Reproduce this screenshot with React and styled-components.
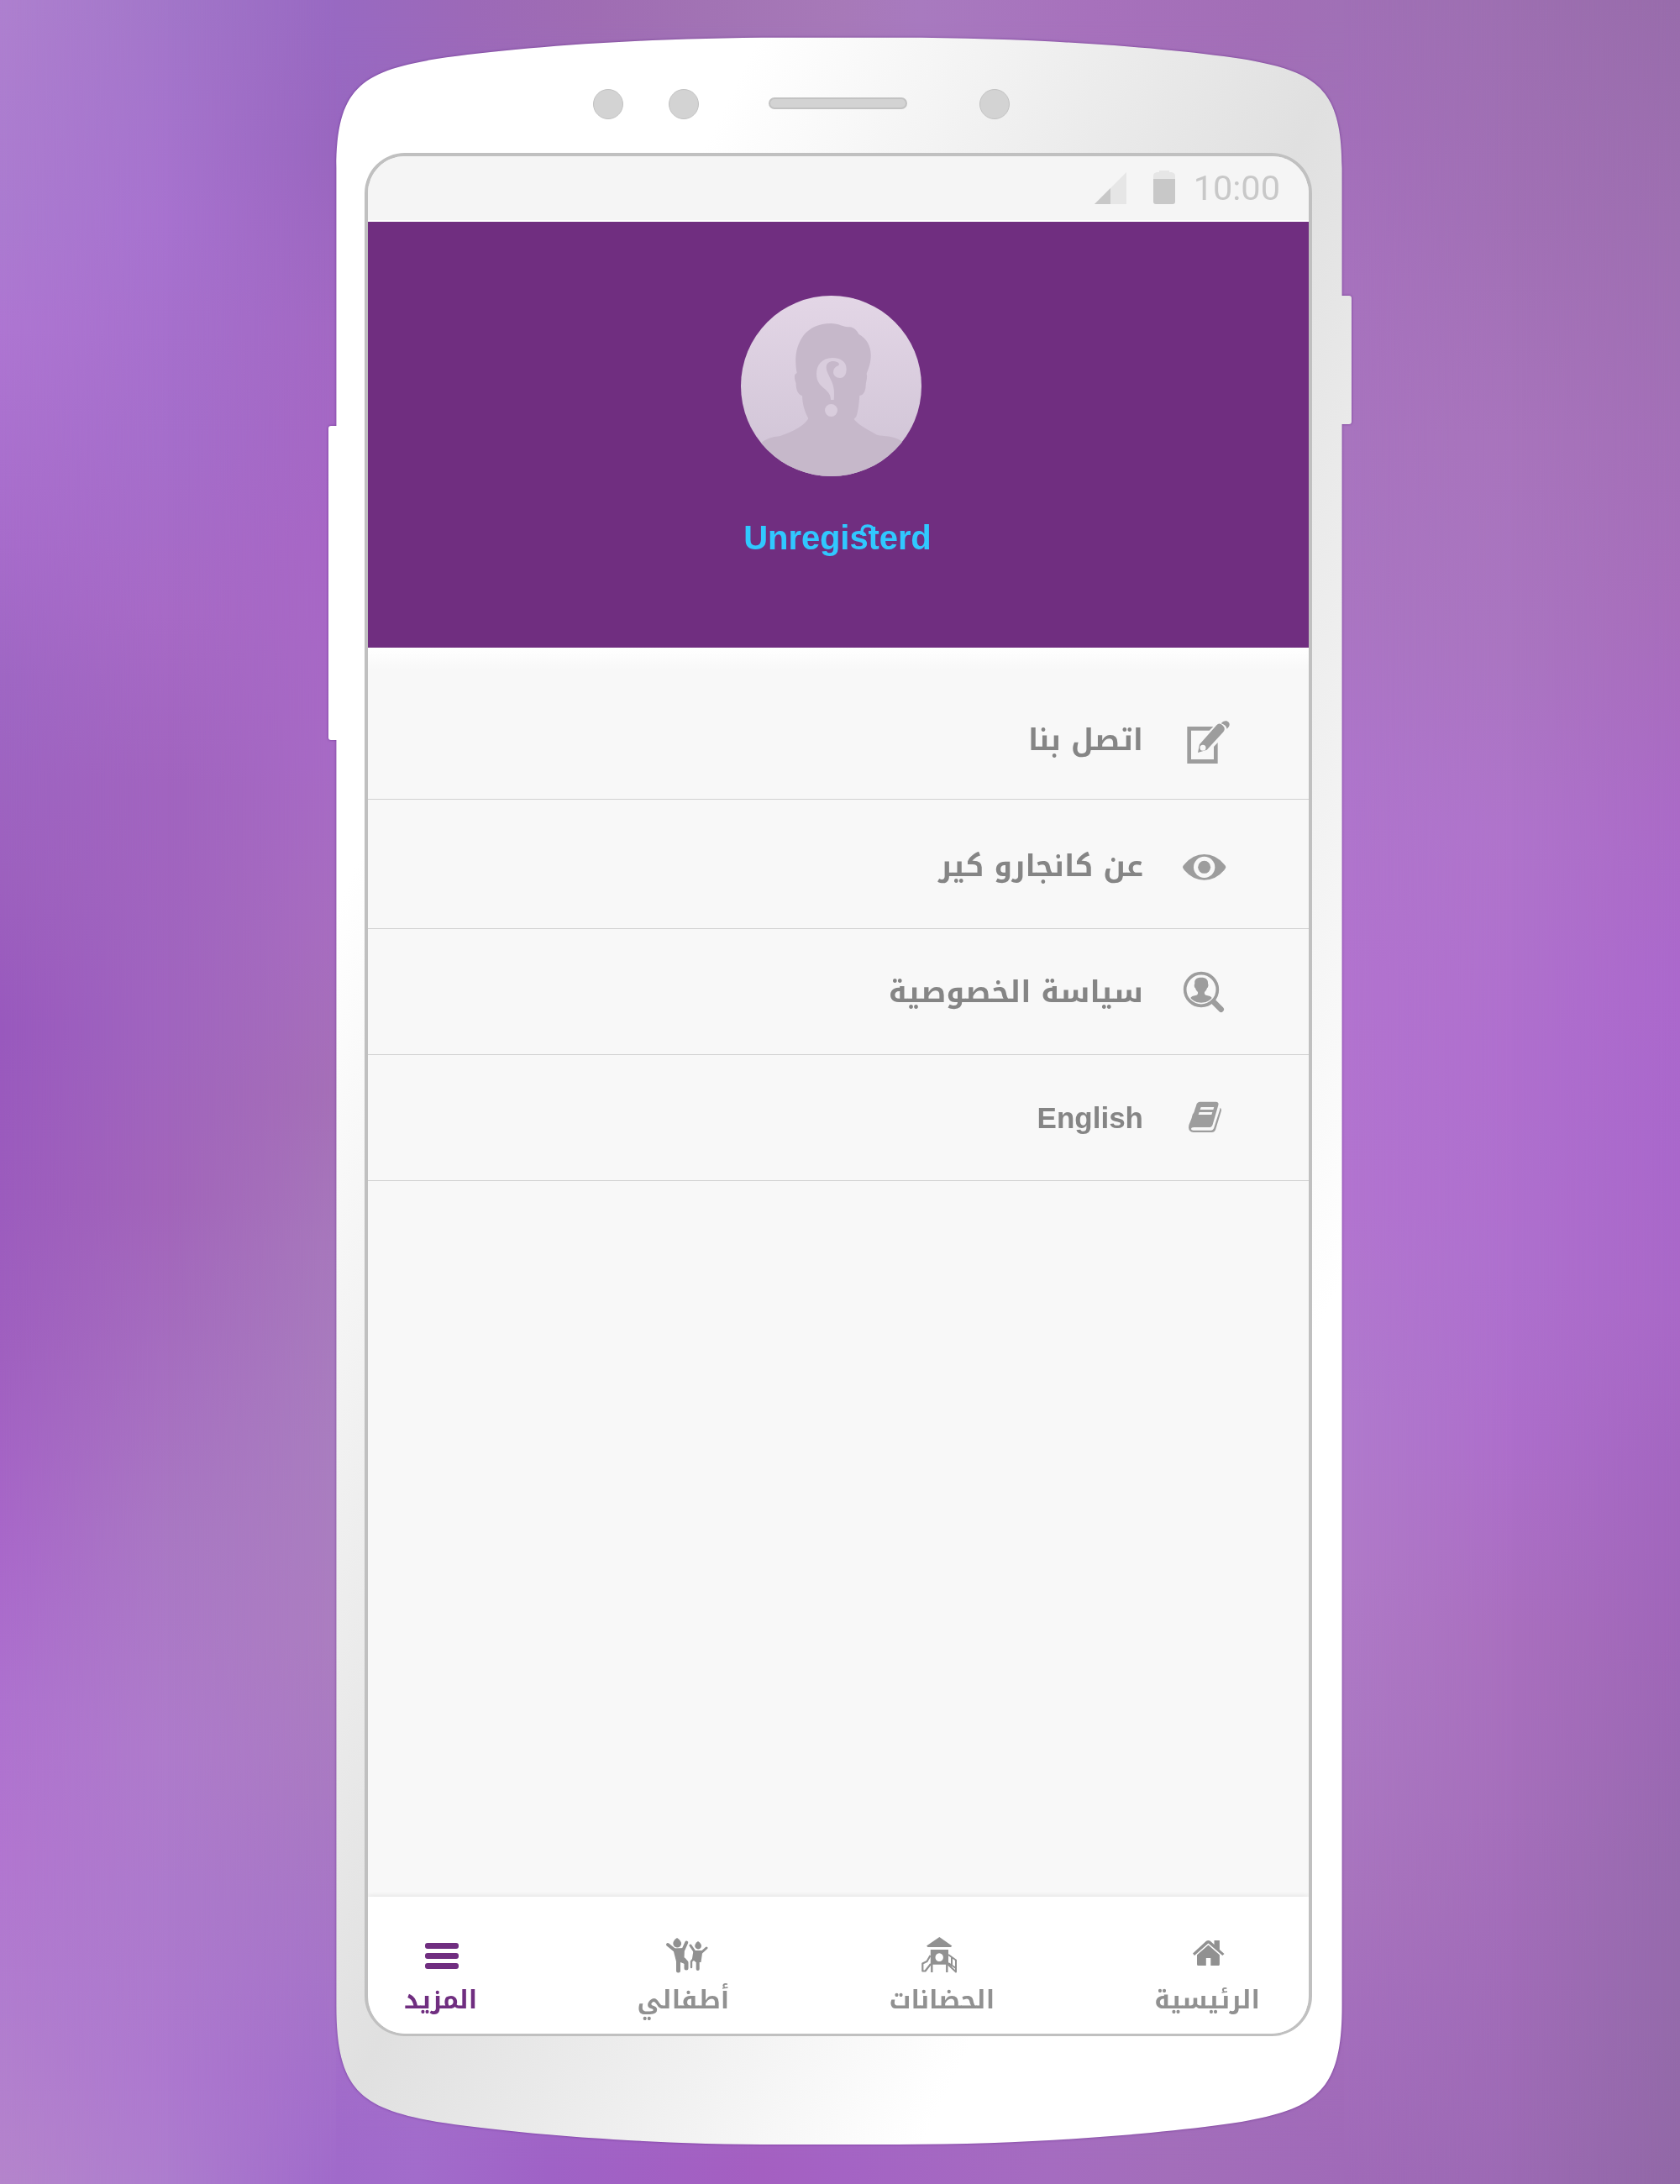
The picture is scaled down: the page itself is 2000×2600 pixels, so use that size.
import React from "react";
import styled, { createGlobalStyle, css } from "styled-components";

const PURPLE = "#702e80";

const GlobalStyle = createGlobalStyle`
  *, *::before, *::after { box-sizing: border-box; }
  body { margin: 0; background: #a56ec0; }
`;

/* ---------- backdrop ---------- */

const Page = styled.div`
  display: grid;
  width: 2000px;
  height: 2600px;
  overflow: hidden;
`;

const cell = css`
  grid-area: 1 / 1;
`;

const Wash = styled.div`
  ${cell}
  background: linear-gradient(to bottom, ${(p) => p.$stops});
  mask-image: ${(p) =>
    p.$to ? `linear-gradient(to right, transparent ${p.$from}px, #000 ${p.$to}px)` : "none"};
`;

const EdgeWash = styled.div`
  ${cell}
  justify-self: center;
  align-self: ${(p) => (p.$bottom ? "end" : "start")};
  width: 1200px;
  height: 400px;
  background: linear-gradient(to right, ${(p) => p.$stops});
  mask-image: linear-gradient(
    ${(p) => (p.$bottom ? "to top" : "to bottom")},
    #000 20px,
    transparent 220px
  );
`;

const WASHES = [
  {
    stops:
      "#ae80cf 0%, #ab7bd0 10%, #ae76d2 15%, #a76ccb 25%, #9f67c4 31%, #9d61bf 40%, #9959be 47%, #9c5cbe 55%, #a060c0 62%, #a968ca 71%, #ae72cf 78%, #b276d0 85%, #b17dcf 92%, #b585cc 100%",
  },
  {
    from: 0,
    to: 200,
    stops:
      "#a276c9 0%, #a772cf 10%, #a56ecb 20%, #a76ac6 28%, #a164bf 36%, #a065bf 47%, #a265ba 55%, #a66fc0 63%, #a978c3 70%, #ae7bcb 80%, #ac7acc 87%, #ad78cf 95%, #ad7dce 100%",
  },
  {
    from: 200,
    to: 400,
    stops:
      "#9869c2 0%, #9966bf 7%, #a268c3 15%, #a766c5 25%, #a76ac5 35%, #a76dbf 43%, #a56fb7 50%, #a778bc 57%, #a97dbf 66%, #ab7dc0 75%, #a979c2 82%, #a674c8 90%, #a26dcb 97%, #a06aca 100%",
  },
  {
    from: 400,
    to: 1600,
    stops:
      "#a070b6 0%, #a36fba 6%, #a772be 13%, #a874bf 20%, #aa75c2 28%, #ae75cb 35%, #b273cf 45%, #b274d0 55%, #b07acd 65%, #b07ac8 72%, #ab78c3 80%, #a874be 87%, #a46ebd 93%, #a06ab8 100%",
  },
  {
    from: 1600,
    to: 1800,
    stops:
      "#9d6fb1 0%, #a170b5 10%, #a874bc 20%, #aa75c1 30%, #af74cb 38%, #af6fce 48%, #ae70ce 58%, #ad6ecb 66%, #a96fbe 75%, #a56fbb 83%, #a16cb8 90%, #9c6ab4 100%",
  },
  {
    from: 1800,
    to: 2000,
    stops:
      "#986cab 0%, #9e6fb1 10%, #a36fb7 20%, #a76dbb 28%, #aa6ac6 37%, #ab68cc 45%, #a967cb 53%, #a968c7 60%, #a366c0 67%, #9f66b8 75%, #976aae 85%, #946aaa 93%, #9168a6 100%",
  },
];

const TOP_EDGE =
  "#9869c2 0%, #9c69b8 13%, #9f6cb3 25%, #a273b4 37%, #a779b8 50%, #a87abf 58%, #a771bc 75%, #a26eb6 92%, #a070b6 100%";
const BOTTOM_EDGE =
  "#a06aca 0%, #a26ccb 8%, #9f62c6 21%, #a45fc1 42%, #a463c4 50%, #a56cc0 71%, #a36eba 83%, #a06ab8 100%";

/* ---------- phone ---------- */

const SHELL_SHAPE =
  "M9.4 156 C9.4 61 39 41 129 26 C219 13 369 .7 539 .7 H677 C847 .7 997 13 1087 26 " +
  "C1177 41 1206.6 61 1206.6 156 V308 H1215 Q1218 308 1218 311 V458 Q1218 461 1215 461 " +
  "H1206.6 V2344 C1206.6 2445 1177 2466 1087 2482 C997 2495.5 847 2509 677 2509 H539 " +
  "C369 2509 219 2495.5 129 2482 C39 2466 9.4 2445 9.4 2344 V837 H3 Q0 837 0 834 " +
  "V466 Q0 463 3 463 H9.4 Z";

const PhoneShadow = styled.div`
  ${cell}
  justify-self: center;
  width: 1218px;
  margin-top: 44px;
  filter: drop-shadow(0 0 1.5px rgba(80, 20, 120, 0.6));
`;

const Shell = styled.div`
  display: flex;
  flex-direction: column;
  width: 1218px;
  height: 2509px;
  background: linear-gradient(to bottom right, #fff 21%, #e0e0e0 50%, #fff 79%);
  clip-path: path("${SHELL_SHAPE}");
`;

const SensorBar = styled.div`
  display: flex;
  align-items: center;
  height: 138px;
  padding: 22px 0 0 315px;
`;

const Sensor = styled.div`
  width: 36px;
  height: 36px;
  margin-right: ${(p) => p.$gap || 0}px;
  border: 1.5px solid #c2c2c2;
  border-radius: 50%;
  background: #d3d3d3;
`;

const Speaker = styled.div`
  width: 165px;
  height: 14px;
  margin: 0 86px 2px 0;
  border: 2px solid #c2c2c2;
  border-radius: 7px;
  background: #d3d3d3;
`;

const Screen = styled.div`
  display: flex;
  flex-direction: column;
  width: 1128px;
  height: 2242px;
  margin-left: 43px;
  border: 4px solid #c0c0c0;
  border-bottom-width: 3px;
  border-radius: 48px;
  background: #f8f8f8;
  overflow: hidden;
`;

const StatusBar = styled.div`
  display: flex;
  flex: none;
  align-items: center;
  justify-content: flex-end;
  height: 78px;
  padding: 0 34px 1px 0;
  border-bottom: 2px solid #fff;
  background: #f5f5f5;
`;

const SignalIcon = styled.svg`
  width: 38px;
  height: 38px;
  margin: 0 32px 0 0;
`;

const BatteryIcon = styled.svg`
  width: 26px;
  height: 40px;
  margin: 0 22px 2px 0;
`;

const Clock = styled.span`
  font: 400 41.5px/50px Roboto, sans-serif;
  color: #c8c8c8;
`;

/* ---------- profile ---------- */

const Profile = styled.header`
  display: flex;
  flex: none;
  flex-direction: column;
  align-items: center;
  height: 507px;
  padding-top: 88px;
  background: ${PURPLE};
`;

const Avatar = styled.svg`
  flex: none;
  width: 215px;
  height: 215px;
  margin-right: 17px;
  border-radius: 50%;
`;

const Name = styled.h1`
  position: relative;
  margin: 48px 2px 0 0;
  font: 700 40px/50px "Liberation Sans", Arial, sans-serif;
  letter-spacing: -0.1px;
  color: #30c8ff;
`;

const Swash = styled.svg`
  position: absolute;
  left: 139px;
  top: 8px;
  width: 20px;
  height: 18px;
`;

/* ---------- menu ---------- */

const Menu = styled.ul`
  flex: 1;
  margin: 0;
  padding: 0;
  list-style: none;
  direction: rtl;
  background: linear-gradient(to bottom, #fff 0, #f8f8f8 26px);
`;

const MenuRow = styled.li`
  display: flex;
  align-items: flex-start;
  height: ${(p) => p.$height}px;
  padding: ${(p) => p.$top}px 78px 0 0;
  border-bottom: 1px solid #d2d2d2;
`;

const MenuIcon = styled.svg`
  flex: none;
  width: 80px;
  height: 80px;
  margin-left: 39px;
  color: #9d9d9d;
`;

const MenuLabel = styled.span`
  font-family: ${(p) => (p.$latin ? `"Liberation Sans", Arial` : `"Noto Kufi Arabic"`)}, sans-serif;
  font-size: 35px;
  font-weight: 700;
  line-height: ${(p) => (p.$latin ? 76 : 78)}px;
  color: #858585;
`;

/* ---------- bottom navigation ---------- */

const NavBar = styled.nav`
  display: flex;
  flex: none;
  align-items: flex-start;
  justify-content: space-between;
  height: 163px;
  padding: 40px 58px 0 43px;
  background: #fff;
  box-shadow: 0 -1px 6px rgba(0, 0, 0, 0.09);
`;

const NavItem = styled.div`
  display: flex;
  flex-direction: column;
  align-items: center;
  color: ${(p) => (p.$active ? PURPLE : "#919191")};
`;

const NavIcon = styled.svg`
  width: 60px;
  height: 60px;
`;

const NavLabel = styled.span`
  font: 700 30px/46px "Noto Kufi Arabic", sans-serif;
  white-space: nowrap;
`;

/* ---------- drawings ---------- */

const PAPER = "#f8f8f8";

const EditDrawing = () => (
  <MenuIcon viewBox="1080 69 240 240" fill="currentColor">
    <path d="M1213 135H1120V267H1229V192L1215 207V252H1134V149H1199Z" />
    <path d="M1158 228 L1164 199 L1225 130 Q1236 116 1252 137 Q1256 146 1248 155 L1190 218 Z" />
    <circle cx="1176" cy="211" r="10.5" fill={PAPER} />
    <path d="M1241 124 Q1249 112 1261 115 Q1276 122 1269 135 L1262 143 Q1258 128 1241 124 Z" />
  </MenuIcon>
);

const EyeDrawing = () => (
  <MenuIcon viewBox="1080 519 240 240" fill="currentColor">
    <path d="M1104 637 Q1104 633 1110 627 Q1140 591 1181 591 Q1222 591 1252 627 Q1258 633 1258 637 Q1258 641 1252 648 Q1222 683 1181 683 Q1140 683 1110 648 Q1104 641 1104 637 Z" />
    <circle cx="1181" cy="637" r="38" fill={PAPER} />
    <circle cx="1181" cy="637" r="22.5" />
  </MenuIcon>
);

const PersonSearchDrawing = () => (
  <MenuIcon viewBox="1080 69 240 240" fill="currentColor">
    <circle cx="1170" cy="174" r="58" fill="none" stroke="currentColor" strokeWidth="11" />
    <path d="M1214 218 L1241 245" stroke="currentColor" strokeWidth="20" strokeLinecap="round" />
    <path d="M1170 131 C1188 131 1195 139 1194 152 C1197 158 1195 166 1191 169 C1189 176 1186 180 1182 183 C1181 189 1182 194 1190 195 C1199 197 1206 199 1208 204 C1198 216 1186 221 1170 221 C1154 221 1142 216 1132 204 C1134 199 1141 197 1150 195 C1158 194 1159 189 1158 183 C1154 180 1151 176 1149 169 C1145 166 1144 158 1147 152 C1145 139 1152 131 1170 131 Z" />
  </MenuIcon>
);

const BookDrawing = () => (
  <MenuIcon viewBox="1080 519 240 240" fill="currentColor">
    <path d="M1164 575 H1224 Q1234 576 1231 587 L1211 656 Q1208 666 1198 666 H1144 Q1134 666 1134 673 Q1135 677 1142 677 H1206 Q1212 677 1215 670 L1236 605 Q1238 598 1237 596 Q1243 599 1242 606 L1221 675 Q1217 684 1208 684 H1142 Q1126 683 1125 667 Q1126 655 1131 646 Q1137 632 1139 621 Q1146 612 1148 600 Q1152 590 1154 582 Q1158 576 1164 575 Z" />
    <path d="M1169 594 H1216 L1213 603 H1166 Z M1163 612 H1210 L1207 621 H1160 Z" fill={PAPER} />
  </MenuIcon>
);

const MoreDrawing = () => (
  <NavIcon viewBox="495.5 2298 60 60" fill="currentColor">
    <rect x="506.5" y="2313" width="40" height="7" rx="3" />
    <rect x="506.5" y="2325" width="40" height="7" rx="3" />
    <rect x="506.5" y="2337" width="40" height="7" rx="3" />
  </NavIcon>
);

const KidsDrawing = () => (
  <NavIcon viewBox="784 2298 60 60" fill="none" stroke="currentColor" strokeLinecap="round" strokeLinejoin="round">
    <g fill="currentColor" stroke="none">
      <path d="M807 2307 Q812.5 2310.5 812 2314.5 Q811 2318.5 807 2318.5 Q803 2318 802.3 2314 Q802.3 2310 807 2307 Z" />
      <path d="M832 2311 Q836.3 2314 836 2317 Q835.2 2320.4 832 2320.4 Q828.8 2320 828.2 2317 Q828.3 2313.5 832 2311 Z" />
      <path d="M802 2319.5 L816 2319 L815.5 2331 L820 2336 L816 2338 L811 2336 L806.5 2337 Z" />
      <path d="M826.5 2322 L837.5 2322 L835.5 2336 L829.5 2336 L827 2334 L824.5 2335 Z" />
    </g>
    <path d="M796 2315 L804 2321.5 M818.3 2312.5 L814.5 2321" strokeWidth="4" />
    <path d="M808.5 2334 V2346 M815 2333 L818 2336.5 V2343" strokeWidth="5" />
    <path d="M823 2316 L828 2323.5 M842 2319 L836 2324.5" strokeWidth="3" />
    <path d="M826.5 2332 L824 2335 V2342" strokeWidth="2.4" />
    <path d="M831.7 2334 V2344" strokeWidth="4" />
  </NavIcon>
);

const PlaygroundDrawing = () => (
  <NavIcon viewBox="1091 2298 60 60" fill="none" stroke="currentColor" strokeLinejoin="round">
    <g fill="currentColor" stroke="none">
      <path d="M1118.4 2306 L1133.3 2316.5 L1132 2318 H1104.5 L1103 2316.5 Z" />
      <path fillRule="evenodd" d="M1107.8 2321 H1129 V2338.7 H1107.8 Z M1118.2 2325.3 a4.7 4.9 0 1 0 .01 0 Z" />
    </g>
    <path d="M1109.3 2338 V2348 M1127.3 2338 V2348" strokeWidth="2.4" />
    <path d="M1107.5 2328 L1103.5 2335 L1098.3 2337.5 V2346.5 H1101.5 L1108 2338" strokeWidth="2.2" />
    <path d="M1129 2327 L1138 2333.5 V2347.5 L1128.5 2338.5 M1133 2330 V2341 M1129 2337 L1138 2343" strokeWidth="2" />
  </NavIcon>
);

const HomeDrawing = () => (
  <NavIcon viewBox="1406.5 2298 60 60" fill="currentColor">
    <path d="M1419.5 2325.5 L1435.5 2310.8 Q1438 2309 1440.3 2310.8 L1445 2315 V2310 H1451.4 V2321 L1457 2326 L1454.8 2328 L1438 2313.6 L1421.5 2328 Z" />
    <path d="M1438 2315.5 L1451.4 2327.2 V2338.5 Q1451.4 2340 1450 2340 H1440.8 V2331 H1435.3 V2340 H1426 Q1424.5 2340 1424.5 2338.5 V2327.2 Z" />
  </NavIcon>
);

const AvatarDrawing = () => (
  <Avatar viewBox="126 66 645 645">
    <defs>
      <linearGradient id="avatarSky" x1="0" y1="0" x2="0" y2="1">
        <stop offset="0" stopColor="#e3d6e6" />
        <stop offset="1" stopColor="#cfc3d5" />
      </linearGradient>
    </defs>
    <rect x="126" y="66" width="645" height="645" fill="url(#avatarSky)" />
    <path
      fill="#c6b8ca"
      d="M448 165 C475 165 490 178 515 178 C530 180 540 190 547 203 C578 220 592 250 590 285 C589 310 582 325 575 345 C579 360 573 370 572 385 C572 405 565 422 550 423 C548 450 545 480 538 498 L530 507 C545 528 580 545 612 563 C640 570 665 563 700 585 L771 711 H126 L203 588 C225 573 245 570 267 567 C300 555 350 535 367 505 C354 480 346 455 345 424 C330 420 322 400 323 380 C316 360 315 345 326 343 C309 260 340 165 448 165 Z"
    />
    <g fill="#d9cddd">
      <path d="M503 328 C503 300 480 288 453 288 C415 288 396 315 396 345 C396 400 448 395 447 438 H458 C460 415 460 395 450 372 C440 350 431 335 431 322 C431 305 445 299 458 300 C472 301 482 309 474 316 C462 320 456 328 456 340 C457 352 466 360 480 360 C495 360 503 348 503 328 Z" />
      <circle cx="448.5" cy="475.5" r="22.5" />
    </g>
  </Avatar>
);

/* ---------- content ---------- */

const MENU = [
  { label: "اتصل بنا", Icon: EditDrawing, height: 181, top: 72 },
  { label: "عن كانجارو كير", Icon: EyeDrawing, height: 154, top: 41 },
  { label: "سياسة الخصوصية", Icon: PersonSearchDrawing, height: 150, top: 37 },
  { label: "English", Icon: BookDrawing, height: 150, top: 37, latin: true },
];

const TABS = [
  { label: "المزيد", Icon: MoreDrawing, active: true },
  { label: "أطفالي", Icon: KidsDrawing },
  { label: "الحضانات", Icon: PlaygroundDrawing },
  { label: "الرئيسية", Icon: HomeDrawing },
];

export default function App() {
  return (
    <Page>
      <GlobalStyle />
      {WASHES.map((w) => (
        <Wash key={w.stops} $stops={w.stops} $from={w.from} $to={w.to} />
      ))}
      <EdgeWash $stops={TOP_EDGE} />
      <EdgeWash $stops={BOTTOM_EDGE} $bottom />

      <PhoneShadow>
        <Shell>
          <SensorBar>
            <Sensor $gap={54} />
            <Sensor $gap={83} />
            <Speaker />
            <Sensor />
          </SensorBar>

          <Screen>
            <StatusBar>
              <SignalIcon viewBox="0 0 38 38">
                <path d="M0 38 L38 0 V38 Z" fill="#e6e6e6" />
                <path d="M0 38 L19 19 V38 Z" fill="#c8c8c8" />
              </SignalIcon>
              <BatteryIcon viewBox="0 0 26 40">
                <path d="M7 0 H19 V2 H22 Q26 3 26 6 V12 H0 V6 Q0 3 4 2 H7 Z" fill="#e6e6e6" />
                <path d="M0 10 H26 V37 Q26 40 23 40 H3 Q0 40 0 37 Z" fill="#c8c8c8" />
              </BatteryIcon>
              <Clock>10:00</Clock>
            </StatusBar>

            <Profile>
              <AvatarDrawing />
              <Name>
                Unregisterd
                <Swash viewBox="0 0 20 18" fill="none" stroke="currentColor" strokeWidth="3.5">
                  <path d="M2 14 V10 Q2 3 9 3 Q15 3 15 8 V12" />
                </Swash>
              </Name>
            </Profile>

            <Menu>
              {MENU.map(({ label, Icon, height, top, latin }) => (
                <MenuRow key={label} $height={height} $top={top}>
                  <Icon />
                  <MenuLabel $latin={latin}>{label}</MenuLabel>
                </MenuRow>
              ))}
            </Menu>

            <NavBar>
              {TABS.map(({ label, Icon, active }) => (
                <NavItem key={label} $active={active}>
                  <Icon />
                  <NavLabel>{label}</NavLabel>
                </NavItem>
              ))}
            </NavBar>
          </Screen>
        </Shell>
      </PhoneShadow>
    </Page>
  );
}
